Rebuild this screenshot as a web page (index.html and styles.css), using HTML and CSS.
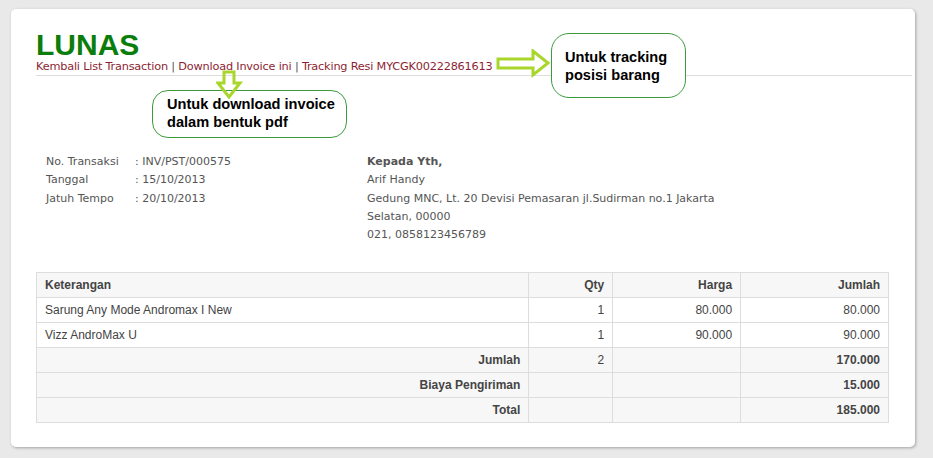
FILE: index.html
```html
<!DOCTYPE html>
<html>

<head>
  <meta name="viewport" content="width=device-width, initial-scale=1.0">
  <link rel="stylesheet" href="styles.css">
</head>

<body>
  <div class="card">
    <h1 class="status">LUNAS</h1>
    <div class="links">
      <a href="#">Kembali List Transaction</a> | <a href="#">Download Invoice ini</a> | <a href="#">Tracking Resi MYCGK00222861613</a>
    </div>

    <div class="info">
      <table class="meta">
        <tr><td class="lbl">No. Transaksi</td><td>: INV/PST/000575</td></tr>
        <tr><td class="lbl">Tanggal</td><td>: 15/10/2013</td></tr>
        <tr><td class="lbl">Jatuh Tempo</td><td>: 20/10/2013</td></tr>
      </table>
      <div class="address">
        <b>Kepada Yth,</b><br>
        Arif Handy<br>
        Gedung MNC, Lt. 20 Devisi Pemasaran jl.Sudirman no.1 Jakarta<br>
        Selatan, 00000<br>
        021, 0858123456789
      </div>
    </div>

    <table class="items">
      <tr class="head">
        <th class="desc">Keterangan</th>
        <th class="qty">Qty</th>
        <th class="price">Harga</th>
        <th class="sum">Jumlah</th>
      </tr>
      <tr>
        <td>Sarung Any Mode Andromax I New</td>
        <td class="num">1</td>
        <td class="num">80.000</td>
        <td class="num">80.000</td>
      </tr>
      <tr>
        <td>Vizz AndroMax U</td>
        <td class="num">1</td>
        <td class="num">90.000</td>
        <td class="num">90.000</td>
      </tr>
      <tr class="total">
        <th>Jumlah</th>
        <td class="num">2</td>
        <td></td>
        <th>170.000</th>
      </tr>
      <tr class="total">
        <th>Biaya Pengiriman</th>
        <td></td>
        <td></td>
        <th>15.000</th>
      </tr>
      <tr class="total">
        <th>Total</th>
        <td></td>
        <td></td>
        <th>185.000</th>
      </tr>
    </table>

    <!-- annotations -->
    <div class="note note-pdf">Untuk download invoice<br>dalam bentuk pdf</div>
    <div class="note note-track">Untuk tracking<br>posisi barang</div>
    <svg class="arrow-down" width="28" height="30" viewBox="0 0 28 30">
      <polygon points="8,2 18,2 18,13 24,13 13,27 2,13 8,13" fill="none" stroke="#a9d62b" stroke-width="3" stroke-linejoin="miter"/>
    </svg>
    <svg class="arrow-right" width="56" height="30" viewBox="0 0 56 30">
      <polygon points="2,10 37,10 37,2 52,14 37,26 37,19 2,19" fill="none" stroke="#a9d62b" stroke-width="3" stroke-linejoin="miter"/>
    </svg>
  </div>
</body>

</html>
```

FILE: styles.css
```css
body {
  margin: 0;
  padding: 9px 18px 11px 11px;
  background-color: #e9e9e9;
  font-family: 'DejaVu Sans', Tahoma, sans-serif;
  font-size: 12px;
  color: #555;
}

.card {
  position: relative;
  width: 854px;
  height: 417px;
  padding: 21px 25px 0 25px;
  background-color: #fff;
  border-radius: 5px;
  box-shadow: 1px 1px 3px rgba(0, 0, 0, 0.3);
}

.status {
  margin: 0;
  font-family: 'Liberation Sans', Arial, sans-serif;
  font-size: 30px;
  line-height: 30px;
  font-weight: bold;
  color: #0b7d0b;
}

.links {
  margin-right: -22px;
  padding-bottom: 1px;
  font-size: 11.3px;
  line-height: 14px;
  color: #555;
  border-bottom: 1px solid #ddd;
  letter-spacing: -0.2px;
}

.links a {
  color: #8c1f33;
  text-decoration: none;
}

.info {
  display: flex;
  margin-top: 77px;
  padding-left: 10px;
  line-height: 18.3px;
  font-size: 11px;
}

.meta {
  width: 321px;
  border-collapse: collapse;
  align-self: flex-start;
}

.meta td {
  padding: 0;
  vertical-align: top;
}

.meta .lbl {
  width: 89px;
}

.address b {
  color: #555;
}

.items {
  width: 853px;
  margin-top: 28px;
  border-collapse: collapse;
  font-family: 'Liberation Sans', Arial, sans-serif;
  font-size: 12px;
  color: #444;
}

.items th,
.items td {
  height: 14px;
  padding: 5px 8px;
  line-height: 14px;
  border: 1px solid #ddd;
  text-align: right;
  font-weight: normal;
}

.items th {
  font-weight: bold;
}

.items .head th,
.items .total th,
.items .total td {
  background-color: #f7f7f7;
}

.items .head .desc,
.items td:first-child {
  text-align: left;
}

.items .desc { width: 476px; }
.items .qty { width: 67px; }
.items .price { width: 111px; }
.items .sum { width: 131px; }

.note {
  position: absolute;
  border: 1px solid #3d9a3d;
  border-radius: 16px;
  font-family: 'Liberation Sans', Arial, sans-serif;
  font-size: 14.6px;
  font-weight: bold;
  line-height: 18px;
  color: #000;
  background: #fff;
}

.note-pdf {
  left: 141px;
  top: 81px;
  width: 179px;
  height: 39px;
  padding: 4px 0 3px 14px;
}

.note-track {
  left: 540px;
  top: 24px;
  width: 120px;
  height: 49px;
  padding: 14px 0 0 13px;
  border-radius: 18px;
}

.arrow-down {
  position: absolute;
  left: 205px;
  top: 61px;
}

.arrow-right {
  position: absolute;
  left: 485px;
  top: 40px;
}
```
